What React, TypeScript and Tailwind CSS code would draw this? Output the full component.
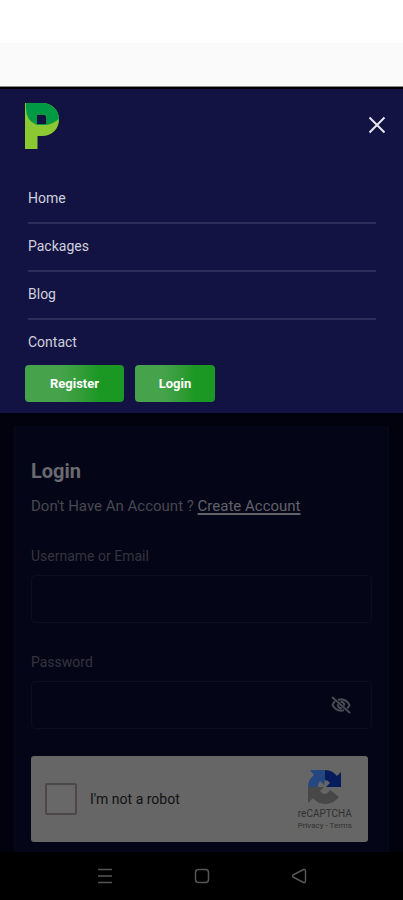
import { useState } from 'react';

const links = ['Home', 'Packages', 'Blog', 'Contact'];

function Logo() {
    return (
        <svg viewBox="0 0 34 46" className="h-[46px] w-[34px]" aria-label="P">
            <path
                fillRule="evenodd"
                fill="#8cc832"
                d="M0 0H17C27 0 34 7 34 16.500C34 26 27 33 17 33H12.500V46H0ZM12 11.500V21H21.500V15Q21.500 11.500 18 11.500Z"
            />
            <path
                fillRule="evenodd"
                fill="#009a44"
                d="M1 0H17C27 0 34 7 34 16Q28 21 21 22H12Q1 18 1 5ZM12 11.500V21H21.500V15Q21.500 11.500 18 11.500Z"
            />
        </svg>
    );
}

function CloseIcon() {
    return (
        <svg viewBox="0 0 18 18" className="size-[18px]" stroke="#e6e6ee" strokeWidth="2" fill="none">
            <path d="M1.500 1.500L16.500 16.500M16.500 1.500L1.500 16.500" />
        </svg>
    );
}

function EyeOffIcon() {
    return (
        <svg viewBox="0 0 20 18" className="h-[18px] w-5" stroke="currentColor" strokeWidth="2" fill="none">
            <path d="M7 3.800Q14.500 1.800 18.500 9Q17.800 10.800 16.200 12.300" />
            <path d="M4 5.300Q2.300 6.900 1.500 9Q5.500 16.200 13 14.200" />
            <path d="M9.500 5.800Q13.300 5.800 13.300 9.800M6.700 8.200Q6.700 12.200 10.800 12.200" />
            <path d="M1 1L19 17" />
        </svg>
    );
}

function CaptchaLogo() {
    return (
        <svg viewBox="0 0 34 34" className="size-[34px]">
            <path fill="#061c5c" d="M17 0C22 0 26 2 29 6L33 2V17H18L22 13Q20 10 17 10Z" />
            <path fill="#24477f" d="M17 0V10L16 15L12 11Q10 13 10 17H0C0 12 2 8 6 5L2 0Z" />
            <path fill="#474747" d="M0 17H16L12 21C15 26 20 24 22 20L31 27C24 36 11 36 5 28L0 33Z" />
        </svg>
    );
}

function Menu() {
    return (
        <header className="border-t-2 border-black bg-[#121342] pb-[11px] font-['Roboto',sans-serif]">
            <div className="flex items-start justify-between pt-[14px] pr-[17px] pl-[25px]">
                <Logo />
                <button type="button" aria-label="Close menu" className="mt-[13px]">
                    <CloseIcon />
                </button>
            </div>
            <nav className="mt-[27px] pr-[27px] pl-7">
                <ul>
                    {links.map((link) => (
                        <li key={link} className="h-12 border-b-2 border-[#2d2d5a] last:h-[45px] last:border-b-0">
                            <a href="#" className="block pt-3 text-sm leading-5 text-[#d0d0dc]">
                                {link}
                            </a>
                        </li>
                    ))}
                </ul>
            </nav>
            <div className="flex gap-[11px] pl-[25px]">
                <button
                    type="button"
                    className="h-[37px] w-[99px] rounded-sm bg-linear-to-r from-[#46a34c] from-35% to-[#1b9723] to-75% text-[13px] font-bold text-white"
                >
                    Register
                </button>
                <button
                    type="button"
                    className="h-[37px] w-20 rounded-sm bg-linear-to-r from-[#46a34c] from-35% to-[#1b9723] to-75% text-[13px] font-bold text-white"
                >
                    Login
                </button>
            </div>
        </header>
    );
}

function Captcha() {
    return (
        <div className="mr-1 flex h-[86px] items-center justify-between rounded-[3px] bg-[#666666] pr-4 pl-[14px]">
            <label className="flex items-center gap-[13px] text-sm text-[#111111]">
                <input
                    type="checkbox"
                    className="size-8 appearance-none rounded-xs border-2 border-[#4c4848] bg-[#686868]"
                />
                I'm not a robot
            </label>
            <div className="flex flex-col items-center pt-1 text-[#303030]">
                <CaptchaLogo />
                <span className="mt-1 text-[10px] leading-3">reCAPTCHA</span>
                <span className="text-[8px] leading-3">
                    <a href="#">Privacy</a> - <a href="#">Terms</a>
                </span>
            </div>
        </div>
    );
}

function LoginForm() {
    const [showPassword, setShowPassword] = useState(false);

    return (
        <main className="bg-[#02020f] px-[14px] pt-[13px] font-['Roboto',sans-serif]">
            <form className="border-x border-[#080818] bg-[#040517] px-4 pt-[33px] pb-[10px]">
                <h1 className="text-xl leading-6 font-bold text-[#6a6a70]">Login</h1>
                <p className="mt-[13px] text-[15px] leading-5 whitespace-nowrap text-[#484850]">
                    Don't Have An Account ?{' '}
                    <a href="#" className="text-[#626268] underline decoration-2 underline-offset-2">
                        Create Account
                    </a>
                </p>

                <label htmlFor="username" className="mt-[30px] block text-sm leading-5 text-[#34343e]">
                    Username or Email
                </label>
                <input
                    id="username"
                    type="text"
                    className="mt-[9px] block h-12 w-full rounded-sm border border-[#0d0d20] bg-transparent px-3 text-sm text-[#6a6a70]"
                />

                <label htmlFor="password" className="mt-[29px] block text-sm leading-5 text-[#34343e]">
                    Password
                </label>
                <div className="mt-[9px] mb-[27px] flex h-12 items-center rounded-sm border border-[#0d0d20] pr-5">
                    <input
                        id="password"
                        type={showPassword ? 'text' : 'password'}
                        className="h-full min-w-0 flex-1 bg-transparent px-3 text-sm text-[#6a6a70]"
                    />
                    <button
                        type="button"
                        aria-label="Toggle password"
                        className="text-[#4a4a54]"
                        onClick={() => setShowPassword(!showPassword)}
                    >
                        <EyeOffIcon />
                    </button>
                </div>

                <Captcha />
            </form>
        </main>
    );
}

function SystemBar() {
    return (
        <footer className="flex h-12 items-center justify-around bg-black px-14">
            <button type="button" aria-label="Recent apps">
                <svg viewBox="0 0 16 16" className="size-4" stroke="#555555" strokeWidth="1.500">
                    <path d="M1 1.500H15M1 8H15M1 14.500H15" />
                </svg>
            </button>
            <button type="button" aria-label="Home screen">
                <svg viewBox="0 0 16 16" className="size-4" stroke="#555555" strokeWidth="1.500" fill="none">
                    <rect x="1.500" y="1.500" width="13" height="13" rx="3" />
                </svg>
            </button>
            <button type="button" aria-label="Back">
                <svg viewBox="0 0 16 16" className="size-4" stroke="#555555" strokeWidth="1.500" fill="none" strokeLinejoin="round">
                    <path d="M2 7L12.500 1.500Q14.500 1 14.500 3V13Q14.500 15 12.500 14.500L2 9Q1 8 2 7Z" />
                </svg>
            </button>
        </footer>
    );
}

export default function App() {
    return (
        <div className="bg-white">
            <div className="h-[43px]" />
            <div className="h-11 border-b border-[#8a8a80] bg-[#fafafa]" />
            <Menu />
            <LoginForm />
            <SystemBar />
        </div>
    );
}
